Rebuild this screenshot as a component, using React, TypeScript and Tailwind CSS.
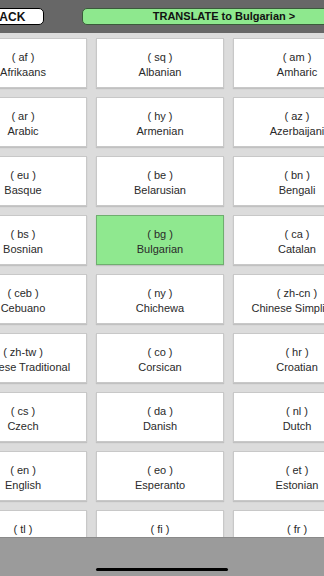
const LANGS: [string, string][] = [
  ['af', 'Afrikaans'],
  ['sq', 'Albanian'],
  ['am', 'Amharic'],
  ['ar', 'Arabic'],
  ['hy', 'Armenian'],
  ['az', 'Azerbaijani'],
  ['eu', 'Basque'],
  ['be', 'Belarusian'],
  ['bn', 'Bengali'],
  ['bs', 'Bosnian'],
  ['bg', 'Bulgarian'],
  ['ca', 'Catalan'],
  ['ceb', 'Cebuano'],
  ['ny', 'Chichewa'],
  ['zh-cn', 'Chinese Simplified'],
  ['zh-tw', 'Chinese Traditional'],
  ['co', 'Corsican'],
  ['hr', 'Croatian'],
  ['cs', 'Czech'],
  ['da', 'Danish'],
  ['nl', 'Dutch'],
  ['en', 'English'],
  ['eo', 'Esperanto'],
  ['et', 'Estonian'],
  ['tl', 'Filipino'],
  ['fi', 'Finnish'],
  ['fr', 'French'],
];

export default function App() {
  const selected = 'bg';

  return (
    <div
      className="w-[324px] h-[576px] flex flex-col overflow-hidden bg-[#dcdcdc]"
      style={{ fontFamily: '"Liberation Sans", Arial, sans-serif' }}
    >
      <div className="h-[33px] shrink-0 bg-[#676767] flex items-start pt-[8px] overflow-hidden">
        <button className="shrink-0 -ml-[28px] w-[72px] h-[17px] bg-white border border-black rounded-[5px] text-[12px] leading-none font-bold text-[#111] flex items-center justify-center">
          BACK
        </button>
        <button className="shrink-0 ml-[38px] w-[284px] h-[17px] bg-[#8ee88e] border border-[#3a5a3a] rounded-[5px] text-[11px] leading-none font-bold text-[#111] flex items-center justify-center">
          TRANSLATE to Bulgarian &gt;
        </button>
      </div>

      <div className="flex-1 overflow-hidden pt-[5px]">
        <div className="-ml-[41px] w-[402px] grid grid-cols-[128px_128px_128px] gap-[9px]">
          {LANGS.map(([code, name]) => {
            const on = code === selected;
            return (
              <div
                key={code}
                className={`h-[50px] flex flex-col items-center justify-center pt-[3px] border text-[11px] leading-[15px] text-[#2a2a2a] whitespace-nowrap overflow-hidden shadow-[0_1px_1px_rgba(0,0,0,0.12)] ${
                  on ? 'bg-[#8fe88f] border-[#6fae6f]' : 'bg-white border-[#c8c8c8]'
                }`}
              >
                <span>( {code} )</span>
                <span>{name}</span>
              </div>
            );
          })}
        </div>
      </div>

      <div className="h-[39px] shrink-0 bg-[#9b9b9b] border-t border-[#8a8a8a] flex items-end justify-center pb-[5px]">
        <div className="w-[132px] h-[3px] bg-black rounded-full" />
      </div>
    </div>
  );
}
